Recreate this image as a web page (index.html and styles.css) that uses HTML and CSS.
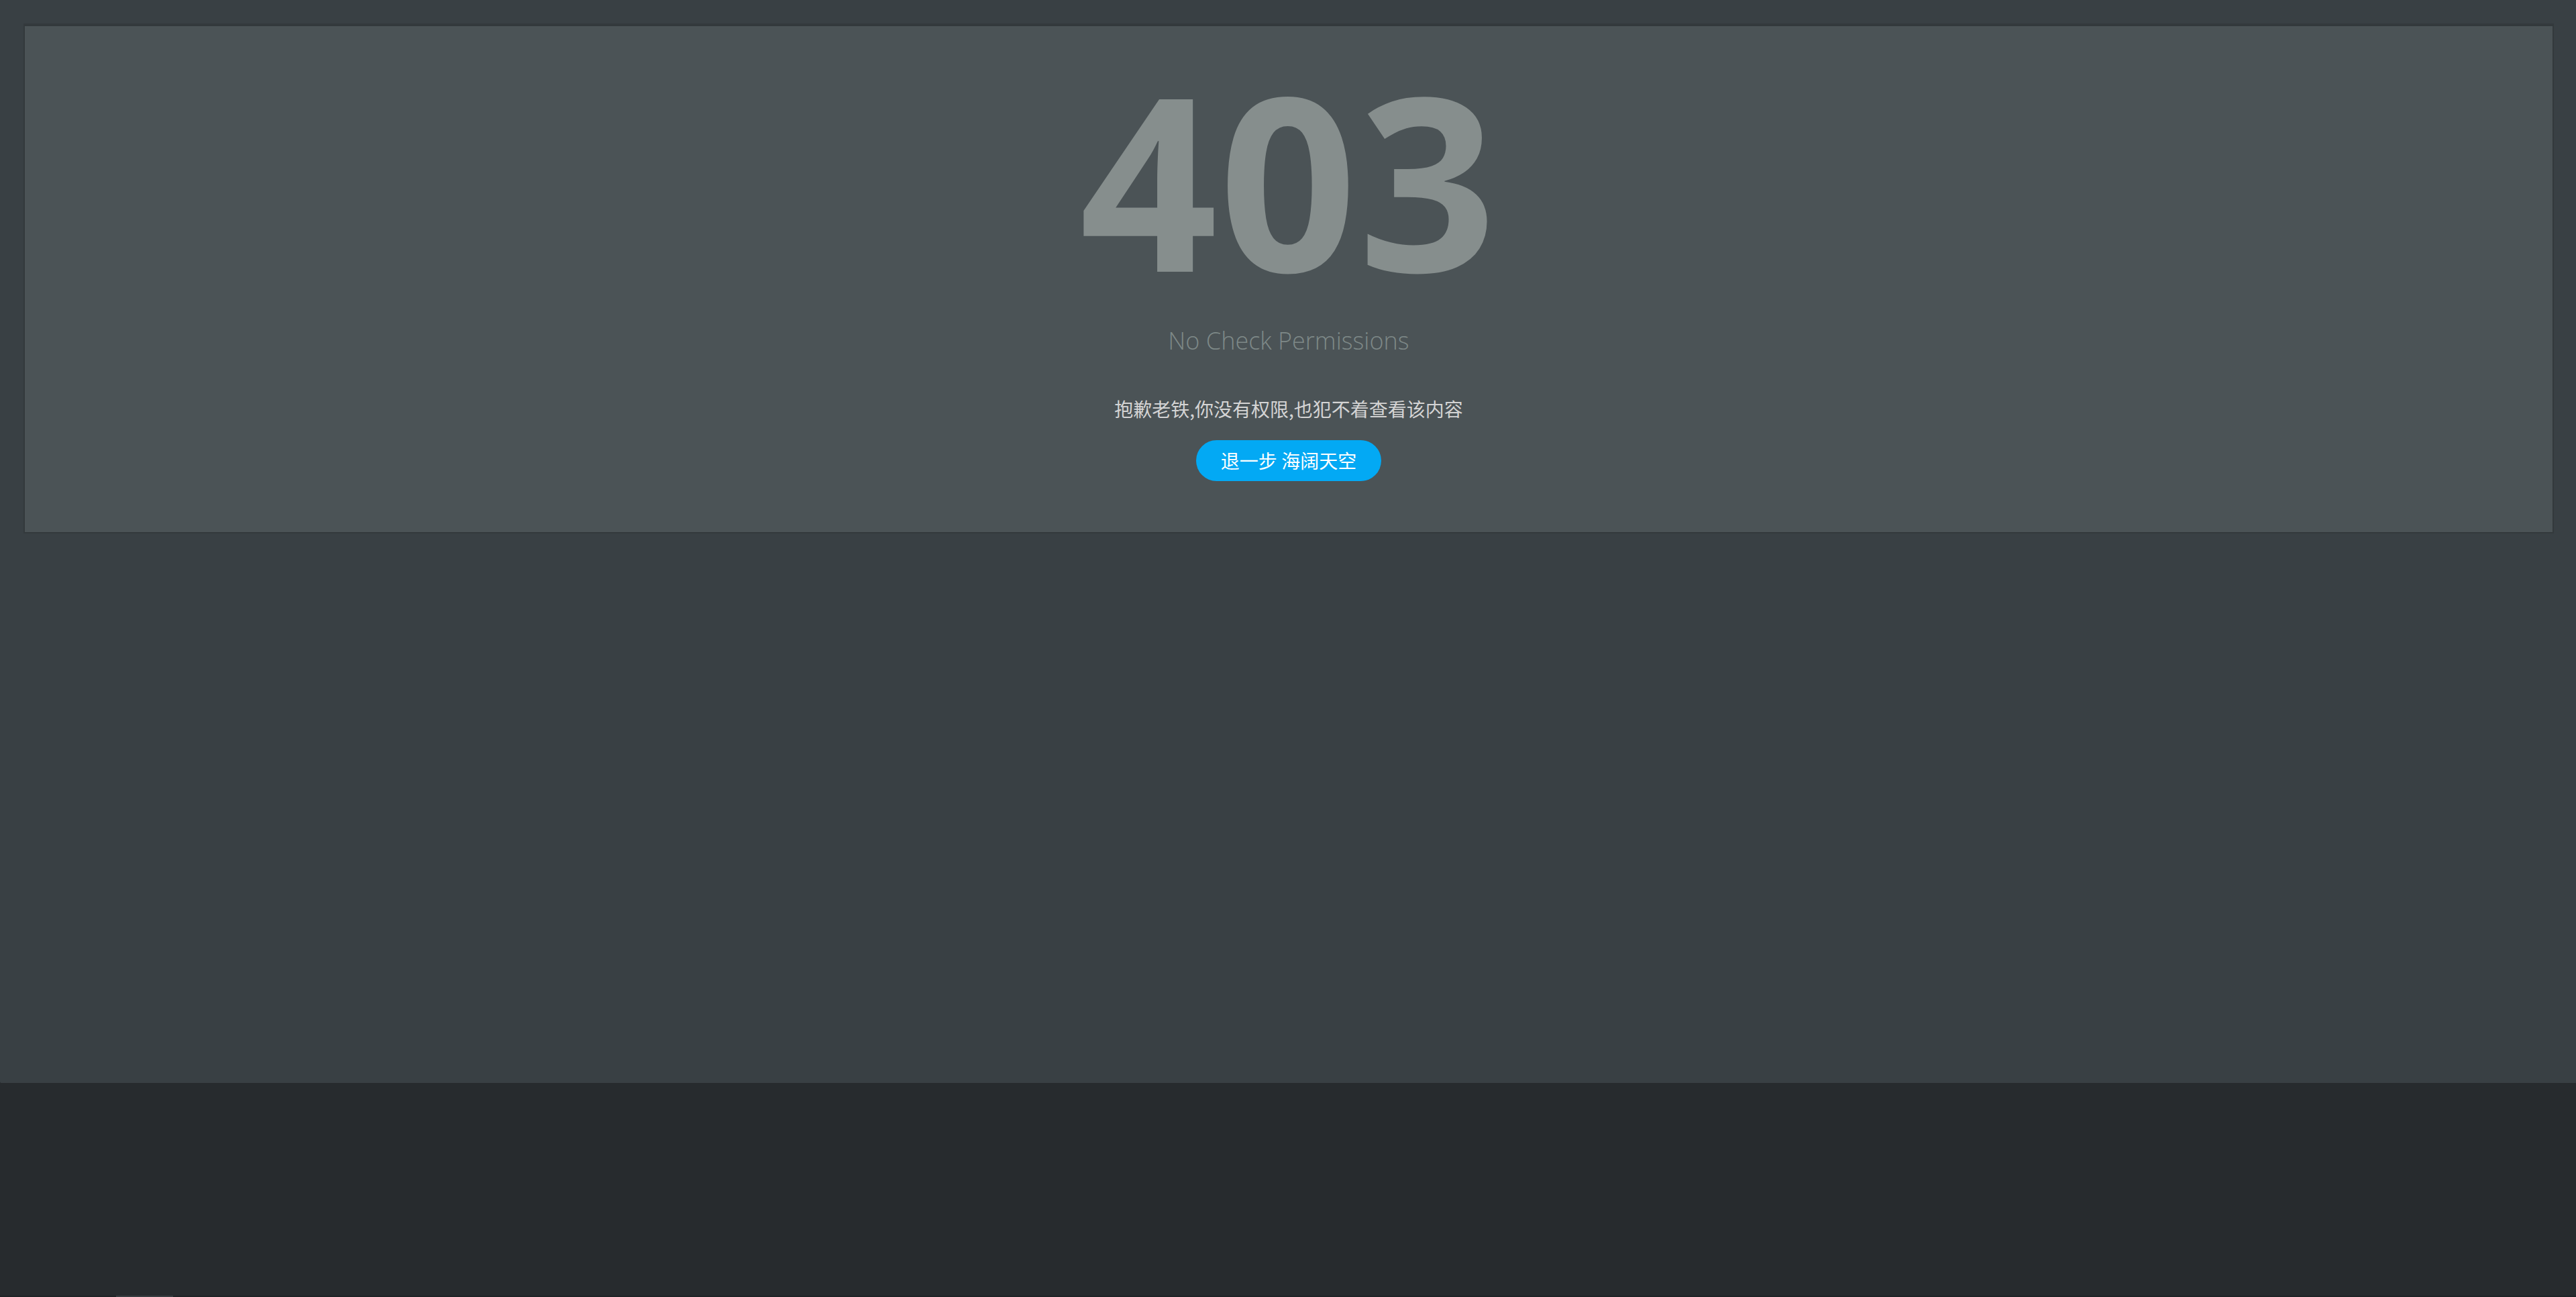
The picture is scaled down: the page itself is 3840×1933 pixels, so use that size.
FILE: index.html
```html
<!DOCTYPE html>
<html lang="zh-CN">
<head>
<meta charset="utf-8">
<title>403</title>
<link rel="stylesheet" href="styles.css">
</head>
<body>
<div class="page">
  <main class="main">
    <section class="panel">
      <div class="code">403</div>
      <div class="subtitle">No Check Permissions</div>
      <p class="message">抱歉老铁,你没有权限,也犯不着查看该内容</p>
      <a class="back-btn" href="#">退一步 海阔天空</a>
    </section>
  </main>
  <div class="lower"></div>
  <div class="hscroll"><span class="hscroll-thumb"></span></div>
</div>
</body>
</html>
```

FILE: styles.css
```css
html, body {
  margin: 0;
  padding: 0;
}
body {
  background: #272b2e;
  font-family: "Open Sans", "Noto Sans CJK SC", sans-serif;
  overflow: hidden;
}
.page {
  height: 1933px;
  display: flex;
  flex-direction: column;
}
.main {
  height: 1614px;
  box-sizing: border-box;
  background: #394044;
  padding: 35px 33px 0 35px;
  border-bottom-left-radius: 2px;
}
.panel {
  background: #4b5356;
  border: 2px solid #33393c;
  border-top-width: 4px;
  text-align: center;
  padding: 46px 0 76px;
}
.code {
  font-family: "Open Sans", sans-serif;
  font-weight: 700;
  font-size: 360px;
  line-height: 360px;
  height: 360px;
  color: #868e8d;
  letter-spacing: 2px;
}
.subtitle {
  margin-top: 45px;
  font-family: "Open Sans", sans-serif;
  font-weight: 300;
  font-size: 36px;
  line-height: 36px;
  color: #7e8988;
}
.message {
  margin: 69px 0 0;
  font-family: "Noto Sans CJK SC", sans-serif;
  font-size: 28px;
  line-height: 28px;
  color: #d4d4d4;
}
.back-btn {
  display: inline-block;
  margin-top: 33px;
  height: 61px;
  line-height: 61px;
  padding: 0 37px;
  border-radius: 31px;
  background: #03a9f4;
  color: #ffffff;
  font-family: "Noto Sans CJK SC", sans-serif;
  font-size: 28px;
  text-decoration: none;
}
.lower {
  flex: 1;
  background: #272b2e;
}
.hscroll {
  height: 2px;
  background: #1f2326;
  display: flex;
}
.hscroll-thumb {
  margin-left: 173px;
  width: 85px;
  background: #383e42;
}
```
